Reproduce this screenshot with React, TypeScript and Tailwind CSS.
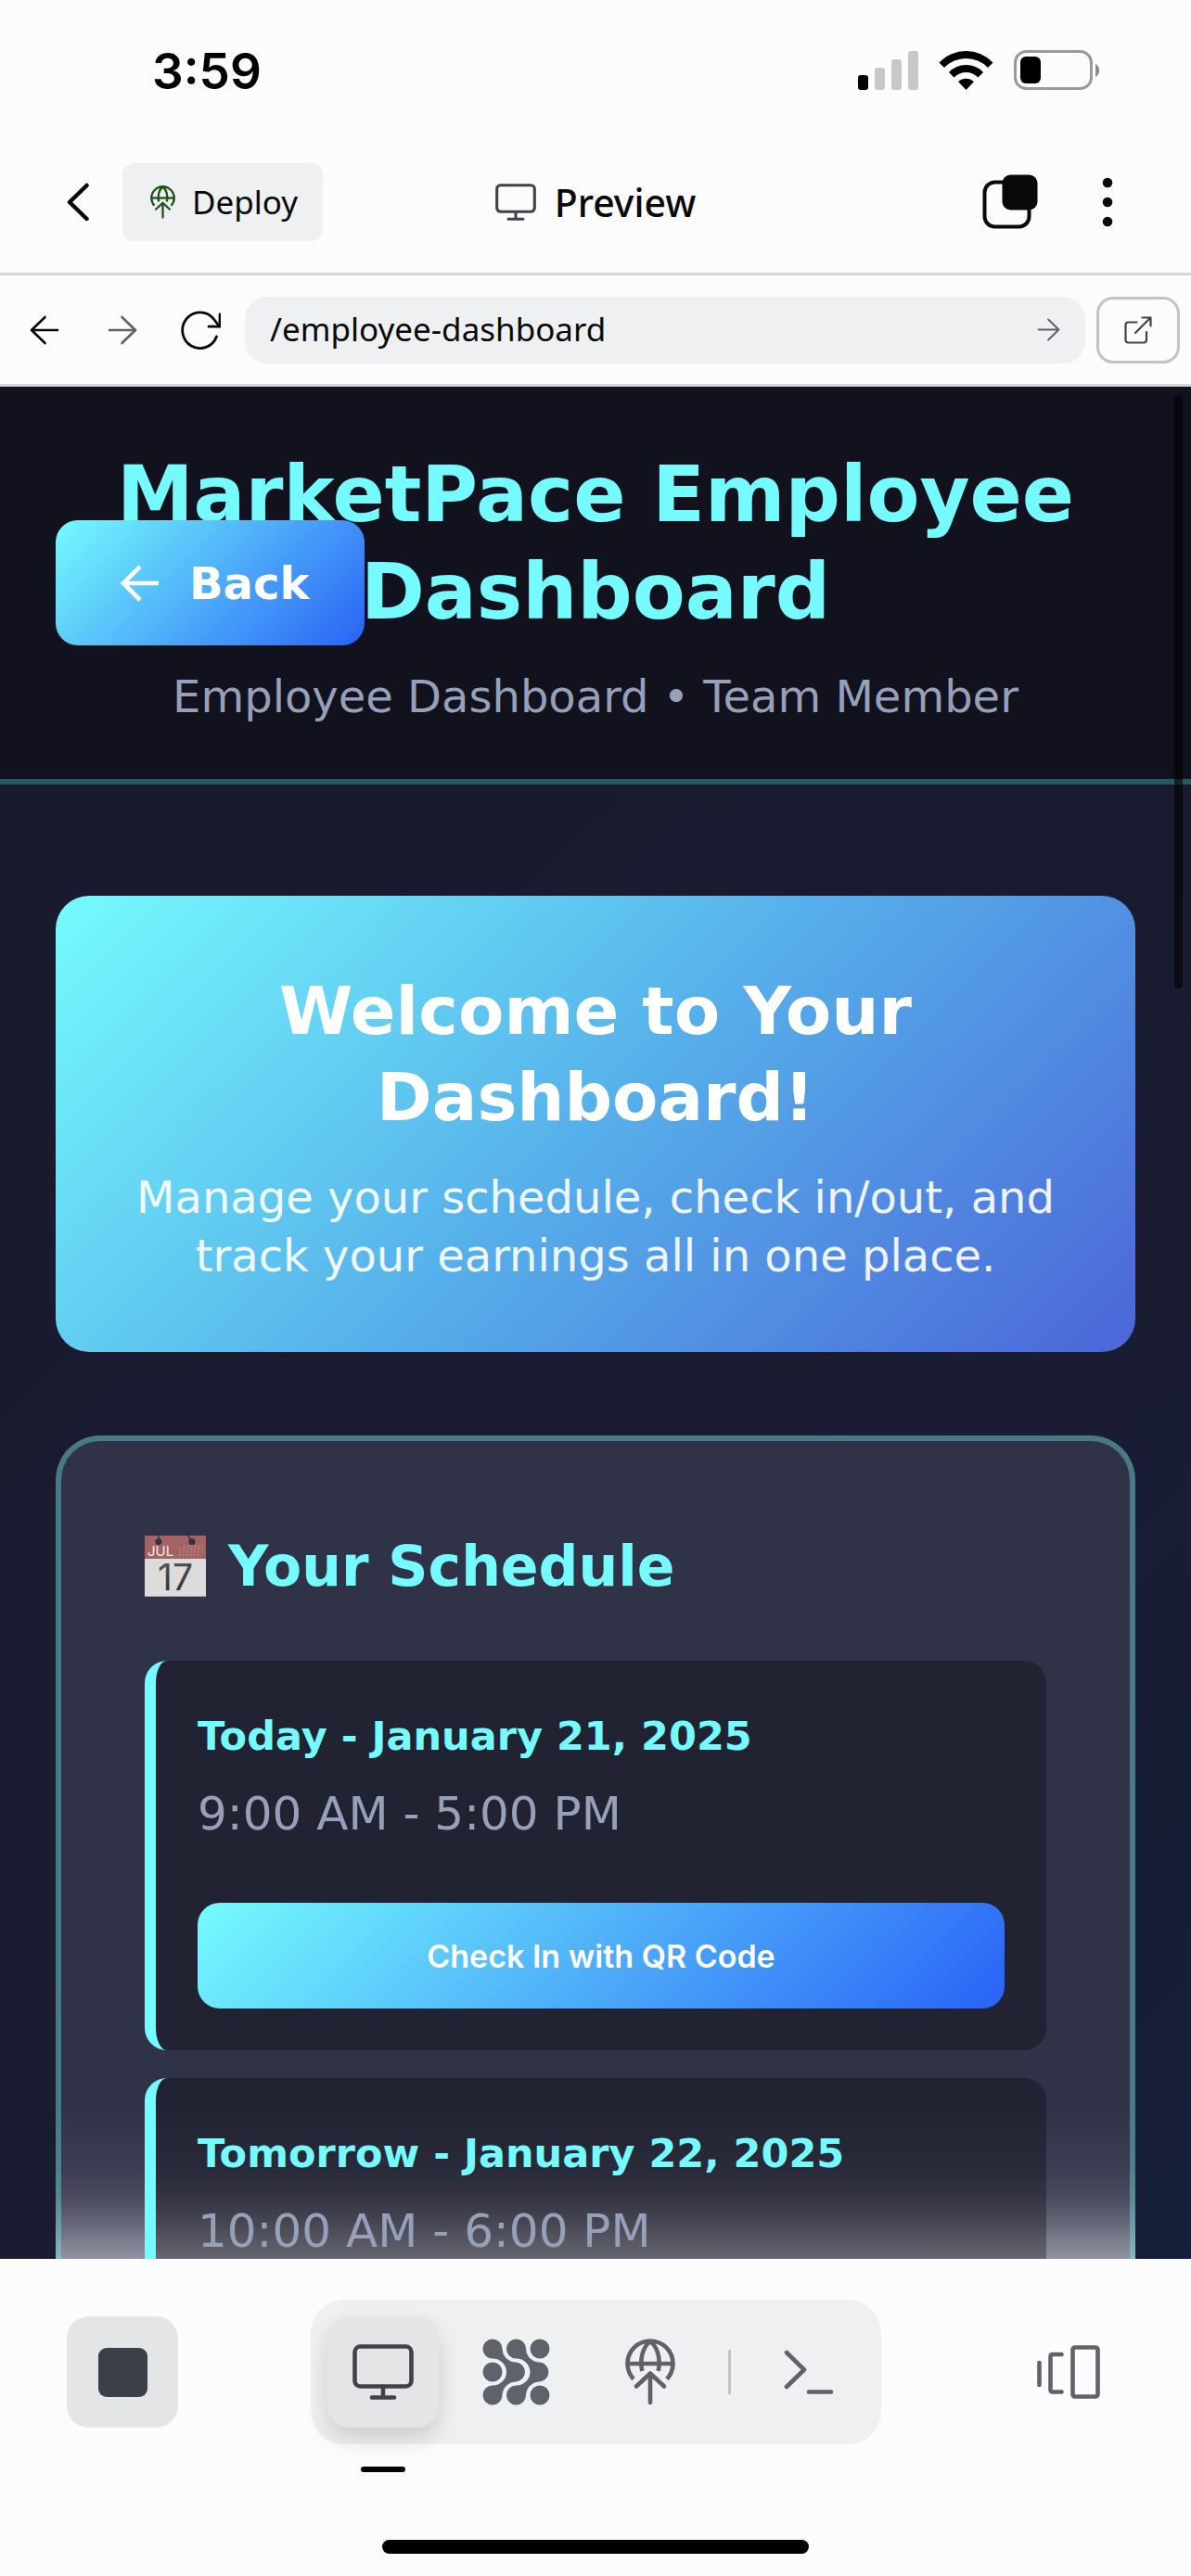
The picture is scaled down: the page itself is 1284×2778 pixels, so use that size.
import type { ReactNode } from "react";

const ui = "font-['Noto_Sans',sans-serif]";

function DeployIcon({ className }: { className: string }) {
  return (
    <svg viewBox="0 0 54 72" className={className} fill="none" stroke="currentColor" strokeWidth="4.6" aria-hidden="true">
      <path d="M9 43.6A24.5 24.5 0 1 1 45 43.6" />
      <path d="M2.5 27H51.5" />
      <path d="M27 3C19 9 15.500 22 18.300 35M27 3C35 9 38.500 22 35.700 35" />
      <path d="M12 51.500L27 37.500L42 51.500M27 38V69" strokeLinecap="round" strokeLinejoin="round" />
    </svg>
  );
}

function MonitorIcon({ className }: { className: string }) {
  return (
    <svg viewBox="0 0 66 60" className={className} fill="none" stroke="currentColor" strokeWidth="4.6" strokeLinecap="round" aria-hidden="true">
      <rect x="2.500" y="2.500" width="61" height="43" rx="6" />
      <path d="M33 46V57M21 57.500H45" />
    </svg>
  );
}

function AgentsIcon() {
  return (
    <svg viewBox="0 0 73 72" className="h-[72px] w-[73px]" fill="currentColor" aria-hidden="true">
      <path d="M21.500 11A15 14.800 0 0 0 36.500 25.600A10.500 10.500 0 0 1 36.500 46.500A15 14.800 0 0 0 21.500 61A10.500 10.500 0 1 1 11 50.500A15 14.500 0 0 0 11 21.500A10.500 10.500 0 1 1 21.500 11Z" />
      <path d="M47 11A15 14.800 0 0 0 62 25.600A10.500 10.500 0 0 1 62 46.500A15 14.800 0 0 0 47 61A10.500 10.500 0 1 1 36.500 50.500A15 14.500 0 0 0 36.500 21.500A10.500 10.500 0 1 1 47 11Z" />
      <circle cx="62" cy="11" r="10.500" />
      <circle cx="11" cy="36" r="10.500" />
      <circle cx="62" cy="61" r="10.500" />
    </svg>
  );
}

function Arrow({ className, flip = false }: { className: string; flip?: boolean }) {
  return (
    <svg viewBox="0 0 32 32" className={className} fill="none" stroke="currentColor" strokeWidth="2.600" strokeLinecap="round" strokeLinejoin="round" aria-hidden="true">
      {flip ? <path d="M30 16H2M16.500 2L2 16L16.500 30" /> : <path d="M2 16H30M15.500 2L30 16L15.500 30" />}
    </svg>
  );
}

function CalendarIcon() {
  return (
    <svg viewBox="0 0 66 66" className="size-[66px] shrink-0" fontFamily="Inter, sans-serif" fontWeight="400" aria-hidden="true">
      <defs>
        <linearGradient id="day" x1="0" y1="0" x2="0" y2="1">
          <stop offset="0" stopColor="#5a5a5a" />
          <stop offset="1" stopColor="#2b2b2b" />
        </linearGradient>
      </defs>
      <rect width="66" height="66" fill="#dcdcdc" />
      <rect width="66" height="25" fill="#a46464" />
      <path d="M15 0V6M47 0L50 6" stroke="#303348" strokeWidth="1.500" />
      <circle cx="15" cy="6.500" r="3.600" fill="#303348" />
      <circle cx="51" cy="6.500" r="3.600" fill="#303348" />
      <path d="M37 21H60M37 17.500H63M37 14H63M42 11.500H63" stroke="#c08d8d" strokeWidth="1.700" strokeDasharray="1.500 2.500" />
      <text x="3" y="22" fontSize="15" fill="#f3e8e8">JUL</text>
      <text x="33" y="59" fontSize="39" fill="url(#day)" textAnchor="middle">17</text>
      <path d="M0 65.500H66" stroke="#a9a9ad" />
    </svg>
  );
}

function StatusBar() {
  return (
    <div className="flex h-[130px] shrink-0 items-start justify-between pt-[44px] pr-[96px] pl-[164px]">
      <time className="font-['Inter',sans-serif] text-[53px] leading-[66px] font-semibold text-black">3:59</time>
      <svg viewBox="0 0 264 46" className="mt-[9px] h-[46px] w-[264px]" role="img" aria-label="Signal, Wi-Fi and battery">
        <rect x="1" y="28" width="11" height="16" rx="3" />
        <g fill="#c8c8c8">
          <rect x="19" y="20" width="11" height="24" rx="3" />
          <rect x="37" y="11" width="11" height="33" rx="3" />
          <rect x="55" y="2" width="11" height="42" rx="3" />
        </g>
        <path d="M88.500 14.500A40 40 0 0 1 146.500 14.500L141 20A32.500 32.500 0 0 0 94 20Z" />
        <path d="M99 25A25.500 25.500 0 0 1 136 25L130.500 30.500A18 18 0 0 0 104.500 30.500Z" />
        <path d="M109 35A12.500 12.500 0 0 1 126 35L117.500 44Z" />
        <rect x="170.500" y="2.500" width="82" height="40" rx="12" fill="none" stroke="#999" strokeWidth="3" />
        <rect x="176" y="8" width="22" height="29" rx="6" />
        <path d="M257 16A8 8 0 0 1 257 30Z" fill="#8a8a8a" />
      </svg>
    </div>
  );
}

function AppBar() {
  return (
    <header className={`grid h-[167px] shrink-0 grid-cols-[1fr_auto_1fr] items-start border-b-3 border-[#d3d5d6] pt-[46px] ${ui}`}>
      <div className="flex items-center pl-[36px]">
        <button type="button" aria-label="Back" className="flex h-[84px] w-[96px] items-center justify-center">
          <svg viewBox="0 0 24 42" className="h-[42px] w-[24px]" fill="none" stroke="#09090b" strokeWidth="4.500" strokeLinecap="round" strokeLinejoin="round" aria-hidden="true">
            <path d="M21.500 3L3 21L21.500 39" />
          </svg>
        </button>
        <button type="button" className="flex h-[84px] items-center gap-[18px] rounded-[12px] bg-[#eff0f2] pr-[27px] pl-[30px] text-[35px] text-[#09090b]">
          <DeployIcon className="h-[36px] w-[27px] text-[#1f5219]" />
          Deploy
        </button>
      </div>
      <h1 className="flex h-[84px] items-center gap-[20px] text-[41px] leading-[82px] font-medium text-[#09090b]">
        <MonitorIcon className="h-[40px] w-[44px] text-[#3f424b]" />
        Preview
      </h1>
      <div className="flex items-center justify-end gap-[33px] pr-[60px]">
        <button type="button" aria-label="Tabs" className="flex h-[84px] w-[84px] items-center justify-center">
          <svg viewBox="0 0 60 60" className="size-[60px]" aria-hidden="true">
            <rect x="2.500" y="8.500" width="48" height="48" rx="11" fill="none" stroke="#09090b" strokeWidth="4" />
            <rect x="21.500" y="0.500" width="38" height="38" rx="9" fill="#09090b" />
          </svg>
        </button>
        <button type="button" aria-label="More" className="flex h-[84px] w-[60px] items-center justify-center">
          <svg viewBox="0 0 12 54" className="h-[54px] w-[12px]" fill="#09090b" aria-hidden="true">
            <circle cx="6" cy="6" r="5.300" />
            <circle cx="6" cy="27" r="5.300" />
            <circle cx="6" cy="48" r="5.300" />
          </svg>
        </button>
      </div>
    </header>
  );
}

function NavButton({ label, children }: { label: string; children: ReactNode }) {
  return (
    <button type="button" aria-label={label} className="flex h-[72px] w-[84px] items-center justify-center text-[#09090b]">
      {children}
    </button>
  );
}

function AddressBar() {
  return (
    <nav className={`flex h-[120px] shrink-0 items-center border-b-3 border-[#d3d5d6] pr-3 pl-1.5 ${ui}`}>
      <NavButton label="Go back">
        <Arrow flip className="size-[32px]" />
      </NavButton>
      <NavButton label="Go forward">
        <Arrow className="size-[32px] text-[#5f626b]" />
      </NavButton>
      <NavButton label="Reload">
        <svg viewBox="0 0 44 42" className="h-[42px] w-[44px]" fill="none" stroke="currentColor" strokeWidth="2.800" strokeLinecap="round" strokeLinejoin="round" aria-hidden="true">
          <path d="M39.500 28A19 19.300 0 1 1 36 8.500L42.500 17" />
          <path d="M43 4V17.200H31" />
        </svg>
      </NavButton>
      <div className="ml-1.5 flex h-[72px] min-w-0 flex-1 items-center rounded-[24px] bg-[#eff0f2] pr-[27px] pl-[27px]">
        <input
          aria-label="Path"
          defaultValue="/employee-dashboard"
          className="min-w-0 flex-1 bg-transparent text-[35px] text-[#09090b] outline-none"
        />
        <button type="button" aria-label="Open path">
          <Arrow className="size-[25px] text-[#5f626b]" />
        </button>
      </div>
      <button type="button" aria-label="Open in new tab" className="ml-3 flex h-[72px] w-[90px] items-center justify-center rounded-[18px] border-3 border-[#c0c4c4]">
        <svg viewBox="0 0 30 30" className="size-[30px]" fill="none" stroke="#3f424b" strokeWidth="2.200" strokeLinecap="round" strokeLinejoin="round" aria-hidden="true">
          <path d="M13.500 6.500H4.500Q1.500 6.500 1.500 9.500V25.500Q1.500 28.500 4.500 28.500H21Q24 28.500 24 25.500V17" />
          <path d="M19.500 1.500H28.500V10.500M28.500 1.500L12 18" />
        </svg>
      </button>
    </nav>
  );
}

function ScheduleItem({ day, hours, children }: { day: string; hours: string; children?: ReactNode }) {
  return (
    <li className="rounded-[24px] border-l-[12px] border-[#75fbfd] bg-black/30 px-[45px] pt-[48px] pb-[45px]">
      <h3 className="text-[43px] leading-[66px] font-bold text-[#75fbfd]">{day}</h3>
      <p className="mt-[12px] text-[50px] leading-[78px] text-[#96a0b8]">{hours}</p>
      {children}
    </li>
  );
}

function Dashboard() {
  return (
    <main className="relative min-h-0 flex-1 overflow-hidden bg-linear-[135deg,#1a1a2e,#1a1b30_50%,#171e39] font-['DejaVu_Sans',sans-serif]">
      <header className="relative border-b-6 border-[#295864] bg-[#12121f] px-[60px] pt-[64px] pb-[50px] text-center">
        <h2 className="text-[83px] leading-[105px] font-bold text-[#75fbfd]">MarketPace Employee Dashboard</h2>
        <p className="mt-[21px] text-[48px] leading-[78px] text-[#96a0b8]">Employee Dashboard • Team Member</p>
        <button
          type="button"
          className="absolute top-[144px] left-[60px] flex h-[135px] items-center gap-[33px] rounded-[24px] bg-linear-[135deg,#75fbfd,#2962f6] pr-[60px] pl-[69px] text-[48px] font-bold text-white"
        >
          <svg viewBox="0 0 42 40" className="h-[40px] w-[42px]" fill="none" stroke="currentColor" strokeWidth="4.600" aria-hidden="true">
            <path d="M42 20H4M22 2L4 20L22 38" />
          </svg>
          Back
        </button>
      </header>

      <div className="px-[60px] pt-[120px]">
        <section className="rounded-[36px] bg-linear-[135deg,#75fbfd,#56afea_50%,#4b65d8] px-[72px] pt-[78px] pb-[72px] text-center">
          <h2 className="text-[72px] leading-[93px] font-bold text-white">Welcome to Your Dashboard!</h2>
          <p className="mt-[30px] text-[48px] leading-[63px] text-white/90">
            Manage your schedule, check in/out, and track your earnings all in one place.
          </p>
        </section>

        <section className="mt-[90px] rounded-[48px] border-6 border-[#75fbfd]/35 bg-[linear-gradient(180deg,#303348_722px,#3b3d53_790px,#4b4b5f_822px,#68697b_852px,#9192a0_887px)] bg-origin-border px-[90px] pt-[90px] pb-[90px]">
          <h2 className="flex items-center gap-[24px] text-[60px] leading-[90px] font-bold text-[#75fbfd]">
            <CalendarIcon />
            Your Schedule
          </h2>
          <ul className="mt-[57px] flex flex-col gap-[30px]">
            <ScheduleItem day="Today - January 21, 2025" hours="9:00 AM - 5:00 PM">
              <button
                type="button"
                className="mt-[57px] h-[114px] w-full rounded-[24px] bg-linear-[135deg,#75fbfd,#2962f6] font-['Inter',sans-serif] text-[34px] font-semibold text-white"
              >
                Check In with QR Code
              </button>
            </ScheduleItem>
            <ScheduleItem day="Tomorrow - January 22, 2025" hours="10:00 AM - 6:00 PM" />
          </ul>
        </section>
      </div>

      <div className="absolute top-[9px] right-[9px] h-[640px] w-[9px] rounded-full bg-black/60" />
    </main>
  );
}

function ToolButton({ label, active = false, children }: { label: string; active?: boolean; children: ReactNode }) {
  return (
    <button
      type="button"
      aria-label={label}
      aria-pressed={active}
      className={
        active
          ? "relative flex size-[120px] items-center justify-center rounded-[24px] bg-[#e3e5e6] text-[#3f424b] shadow-[0_12px_24px_rgba(0,0,0,0.15)]"
          : "flex size-[120px] items-center justify-center rounded-[24px] text-[#5f626b]"
      }
    >
      {children}
      {active && <span className="absolute top-[162px] left-[36px] h-[6px] w-[48px] rounded-full bg-black" />}
    </button>
  );
}

function Toolbar() {
  return (
    <footer className="relative shrink-0 bg-[#fcfcfc] pt-[44px] pb-[24px]">
      <div className="flex items-center justify-between px-[72px]">
        <button type="button" aria-label="Stop" className="flex size-[120px] items-center justify-center rounded-[24px] bg-[#e3e5e6]">
          <span className="size-[53px] rounded-[9px] bg-[#3c3f47]" />
        </button>
        <div className="flex items-center gap-[24px] rounded-[36px] bg-[#eff0f2] p-[18px]">
          <ToolButton label="Preview" active>
            <MonitorIcon className="h-[60px] w-[66px]" />
          </ToolButton>
          <ToolButton label="Agent">
            <AgentsIcon />
          </ToolButton>
          <ToolButton label="Deployments">
            <DeployIcon className="h-[72px] w-[54px]" />
          </ToolButton>
          <span className="h-[48px] w-[3px] bg-[#c0c4c4]" />
          <ToolButton label="Console">
            <svg viewBox="0 0 54 48" className="h-[48px] w-[54px]" fill="none" stroke="currentColor" strokeWidth="4.600" strokeLinecap="round" strokeLinejoin="round" aria-hidden="true">
              <path d="M3 3L22 21.500L3 40M27 45.500H51" />
            </svg>
          </ToolButton>
        </div>
        <ToolButton label="Tabs">
          <svg viewBox="0 0 68 58" className="h-[58px] w-[68px]" fill="none" stroke="currentColor" strokeWidth="4.600" strokeLinecap="round" strokeLinejoin="round" aria-hidden="true">
            <rect x="38.500" y="2.500" width="27" height="53" rx="2.500" />
            <path d="M26.500 10H17Q14.500 10 14.500 12.500V48Q14.500 50.500 17 50.500H26.500" />
            <path d="M2.500 19V43" />
          </svg>
        </ToolButton>
      </div>
      <div className="mx-auto mt-[103px] h-[15px] w-[460px] rounded-full bg-black" />
    </footer>
  );
}

export default function App() {
  return (
    <div className="flex h-screen flex-col bg-[#fcfcfc]">
      <StatusBar />
      <AppBar />
      <AddressBar />
      <Dashboard />
      <Toolbar />
    </div>
  );
}
